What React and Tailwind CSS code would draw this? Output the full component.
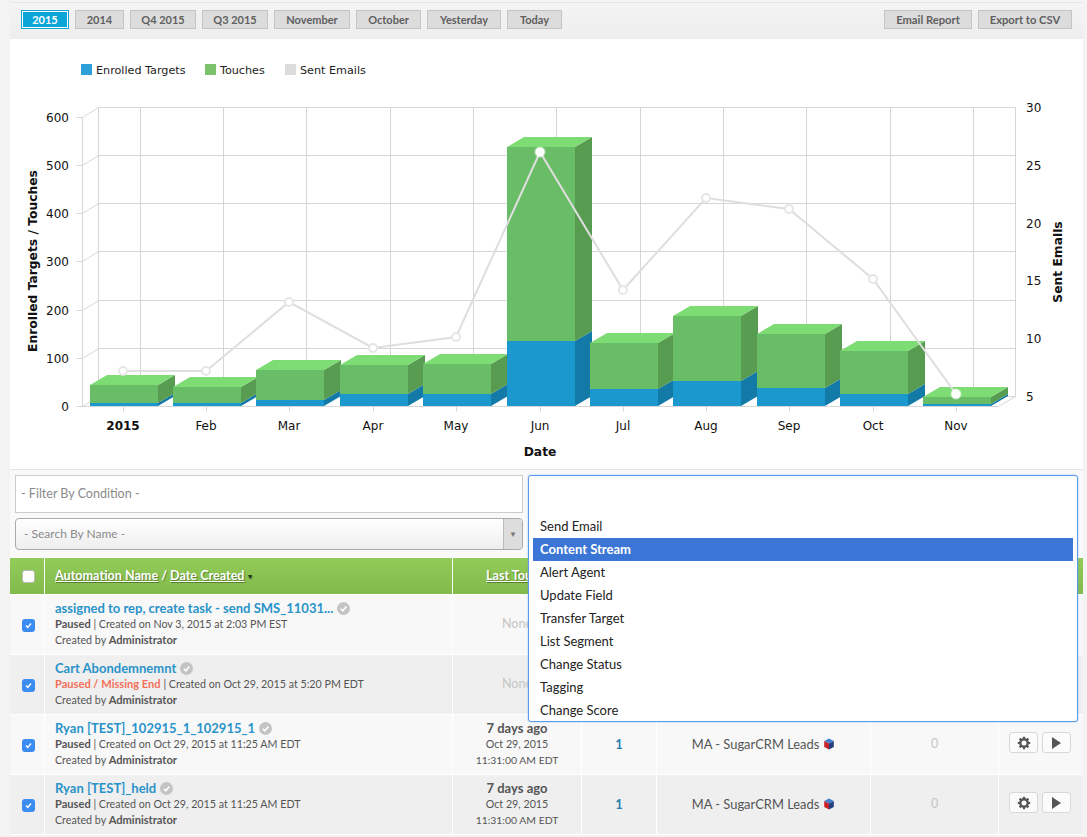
const ranges = [
  { label: '2015', width: 'w-[48px]', active: true },
  { label: '2014', width: 'w-[49px]' },
  { label: 'Q4 2015', width: 'w-[66px]' },
  { label: 'Q3 2015', width: 'w-[66px]' },
  { label: 'November', width: 'w-[76px]' },
  { label: 'October', width: 'w-[65px]' },
  { label: 'Yesterday', width: 'w-[74px]' },
  { label: 'Today', width: 'w-[55px]' },
];

const months = ['2015', 'Feb', 'Mar', 'Apr', 'May', 'Jun', 'Jul', 'Aug', 'Sep', 'Oct', 'Nov'];

// front-face top of the bar and top of the blue part, in page pixels
const bars = [
  [90, 385, 403],
  [173, 387, 403],
  [256, 370, 400],
  [340, 365, 394],
  [423, 364, 394],
  [507, 147, 341],
  [590, 343, 389],
  [673, 316, 381],
  [757, 334, 388],
  [840, 351, 394],
  [923, 397, 404],
];

const sentEmails = [
  [123, 371],
  [206, 371],
  [289, 302],
  [373, 348],
  [456, 337],
  [540, 152],
  [623, 290],
  [706, 198],
  [789, 209],
  [873, 279],
  [956, 394],
];

const gridX = [140, 223, 306, 390, 473, 556, 640, 723, 806, 890, 973];
const gridY = [107, 155, 203, 251, 300, 348];
const leftTicks = [
  ['600', 117],
  ['500', 165],
  ['400', 213],
  ['300', 261],
  ['200', 310],
  ['100', 358],
  ['0', 406],
];
const rightTicks = [
  ['30', 108],
  ['25', 166],
  ['20', 224],
  ['15', 281],
  ['10', 339],
  ['5', 397],
];

const actionsList = ['Send Email', 'Content Stream', 'Alert Agent', 'Update Field', 'Transfer Target', 'List Segment', 'Change Status', 'Tagging', 'Change Score'];

const rows = [
  {
    name: 'assigned to rep, create task - send SMS_11031...',
    status: 'Paused',
    created: 'Created on Nov 3, 2015 at 2:03 PM EST',
    none: true,
    bg: 'bg-[#f8f8f8]',
  },
  {
    name: 'Cart Abondemnemnt',
    status: 'Paused / Missing End',
    warn: true,
    created: 'Created on Oct 29, 2015 at 5:20 PM EDT',
    none: true,
    bg: 'bg-[#efefef]',
  },
  {
    name: 'Ryan [TEST]_102915_1_102915_1',
    status: 'Paused',
    created: 'Created on Oct 29, 2015 at 11:25 AM EDT',
    bg: 'bg-[#f8f8f8]',
  },
  {
    name: 'Ryan [TEST]_held',
    status: 'Paused',
    created: 'Created on Oct 29, 2015 at 11:25 AM EDT',
    bg: 'bg-[#efefef]',
  },
];

const CheckBadge = () => (
  <svg width="13" height="13" viewBox="0 0 13 13" className="ml-1 inline-block align-[-2px]">
    <circle cx="6.5" cy="6.5" r="6.5" fill="#c4c4c4" />
    <path d="M3.8 6.8l2 2 3.6-4.2" fill="none" stroke="#fff" strokeWidth="1.5" />
  </svg>
);

const Cube = () => (
  <svg width="12" height="12" viewBox="0 0 12 12" className="ml-1 inline-block align-[-1px]">
    <path d="M6 0.5l4.8 2.4L6 5.4 1.2 2.9z" fill="#3f7fd0" />
    <path d="M1.2 2.9L6 5.4v6L1.2 9z" fill="#c8242c" />
    <path d="M10.8 2.9L6 5.4v6L10.8 9z" fill="#24407e" />
  </svg>
);

const Gear = () => (
  <svg width="14" height="14" viewBox="0 0 14 14">
    <circle cx="7" cy="7" r="3.7" fill="none" stroke="#555" strokeWidth="2.4" />
    <path d="M7 0.8v2.4M7 10.8v2.4M0.8 7h2.4M10.8 7h2.4M2.6 2.6l1.7 1.7M9.7 9.7l1.7 1.7M11.4 2.6L9.7 4.3M4.3 9.7l-1.7 1.7" stroke="#555" strokeWidth="2.2" />
  </svg>
);

const PlayIcon = () => (
  <svg width="11" height="14" viewBox="0 0 11 14">
    <path d="M1 1l9 6-9 6z" fill="#555" />
  </svg>
);

const Checkbox = ({ checked }) => (
  <span
    className={`flex h-[13px] w-[13px] items-center justify-center rounded-[3px] ${
      checked ? 'bg-[#3b8df1]' : 'border border-[#bbb] bg-white'
    }`}
  >
    {checked && (
      <svg width="9" height="9" viewBox="0 0 9 9">
        <path d="M2 4.6l1.8 1.9L7 2.5" fill="none" stroke="#fff" strokeWidth="1.4" />
      </svg>
    )}
  </span>
);

const Chart = () => (
  <svg width="1073" height="430" viewBox="10 39 1073 430" className="block" style={{ fontFamily: '"DejaVu Sans", sans-serif' }}>
    {/* legend */}
    <rect x="81" y="64" width="11" height="11" fill="#2d9fd9" />
    <text x="96" y="74" fontSize="11.2" fill="#222">Enrolled Targets</text>
    <rect x="205" y="64" width="11" height="11" fill="#7ac36a" />
    <text x="220" y="74" fontSize="11.2" fill="#222">Touches</text>
    <rect x="285" y="64" width="11" height="11" fill="#dcdcdc" />
    <text x="300" y="74" fontSize="11.2" fill="#222">Sent Emails</text>

    {/* back plane and walls */}
    <g stroke="#d6d6d6" strokeWidth="1" fill="none" transform="translate(0.5 0.5)">
      {gridY.map((y) => (
        <path key={y} d={`M82 ${y + 10}L98 ${y}H1015`} />
      ))}
      {gridX.map((x) => (
        <path key={x} d={`M${x} 107V396`} />
      ))}
      <path d="M82 117V406L98 396V107" />
      <path d="M1015 107V396L998 406H82" />
      <path d="M98 396H1015" />
      {leftTicks.map(([label, y]) => (
        <path key={label} d={`M76 ${y}H82`} />
      ))}
      {sentEmails.map(([x]) => (
        <path key={x} d={`M${x} 406V411`} />
      ))}
    </g>

    {/* bars */}
    {bars.map(([x, top, blue]) => (
      <g key={x}>
        <path d={`M${x + 68} ${blue}l17 -10V396l-17 10z`} fill="#137aa8" />
        <path d={`M${x + 68} ${top}l17 -10V${blue - 10}l-17 10z`} fill="#589c52" />
        <path d={`M${x} ${top}l17 -10h68l-17 10z`} fill="#7edc74" />
        <rect x={x} y={top} width="68" height={blue - top} fill="#6abd67" />
        <rect x={x} y={blue} width="68" height={406 - blue} fill="#1b98cd" />
      </g>
    ))}

    {/* sent emails line */}
    <polyline points={sentEmails.map((p) => p.join(',')).join(' ')} fill="none" stroke="#dedede" strokeWidth="2" />
    {sentEmails.map(([x, y], i) =>
      i === 5 || i === 10 ? (
        <circle key={x} cx={x} cy={y} r="4.5" fill="#fff" stroke="#fff" strokeOpacity="0.5" strokeWidth="2" />
      ) : (
        <circle key={x} cx={x} cy={y} r="4" fill="#fff" stroke="#e6e6e6" strokeWidth="2" />
      )
    )}

    {/* axis labels */}
    <g fontSize="12" fill="#111">
      {leftTicks.map(([label, y]) => (
        <text key={label} x="69" y={y + 5} textAnchor="end">{label}</text>
      ))}
      {rightTicks.map(([label, y]) => (
        <text key={label} x="1026" y={y + 4}>{label}</text>
      ))}
      {months.map((m, i) => (
        <text key={m} x={sentEmails[i][0]} y="430" textAnchor="middle" fontWeight={i === 0 ? 'bold' : 'normal'}>
          {m}
        </text>
      ))}
    </g>
    <g fontSize="12.3" fontWeight="bold" fill="#111">
      <text x="540" y="456" textAnchor="middle">Date</text>
      <text transform="translate(37 261) rotate(-90)" textAnchor="middle">Enrolled Targets / Touches</text>
      <text transform="translate(1062 262) rotate(-90)" textAnchor="middle">Sent Emails</text>
    </g>
  </svg>
);

const Row = ({ row }) => (
  <div className={`flex h-[60px] border-b border-white text-[10.7px] text-[#555] ${row.bg}`}>
    <div className="flex w-[35px] shrink-0 items-center justify-center border-r border-white pl-[2px] pt-[2px]">
      <Checkbox checked />
    </div>
    <div className="w-[408px] shrink-0 border-r border-white pl-[10px] pt-[5px] leading-[16px]">
      <div className="text-[13px] font-bold text-[#2a93c9]">
        {row.name}
        <CheckBadge />
      </div>
      <div>
        <b className={`text-[11.1px] ${row.warn ? 'text-[#f4705a]' : ''}`}>{row.status}</b> | {row.created}
      </div>
      <div>
        Created by <b className="text-[11.1px]">Administrator</b>
      </div>
    </div>
    <div className="w-[129px] shrink-0 border-r border-white pt-[5px] text-center leading-[16px]">
      {row.none ? (
        <div className="pt-[16px] text-[12.5px] text-[#c4c4c4]">None</div>
      ) : (
        <>
          <div className="text-[13px] font-bold">7 days ago</div>
          <div>Oct 29, 2015</div>
          <div className="text-[10.4px]">11:31:00 AM EDT</div>
        </>
      )}
    </div>
    <div className="flex w-[75px] shrink-0 items-center justify-center border-r border-white text-[13px] font-bold text-[#2a7fb0]">
      {!row.none && '1'}
    </div>
    <div className="flex w-[214px] shrink-0 items-center justify-center border-r border-white text-[12.9px]">
      {!row.none && (
        <span>
          MA - SugarCRM Leads
          <Cube />
        </span>
      )}
    </div>
    <div className="flex w-[128px] shrink-0 items-center justify-center border-r border-white text-[12.5px] text-[#c4c4c4]">
      {!row.none && '0'}
    </div>
    <div className="flex flex-1 justify-start gap-[4px] pl-[10px] pt-[17px]">
      <button className="flex h-[21px] w-[29px] items-center justify-center rounded-[3px] border border-[#d8d8d8] bg-[#fbfbfb]">
        <Gear />
      </button>
      <button className="flex h-[21px] w-[29px] items-center justify-center rounded-[3px] border border-[#d8d8d8] bg-[#fbfbfb]">
        <PlayIcon />
      </button>
    </div>
  </div>
);

export default function App() {
  return (
    <div className="h-[837px] overflow-hidden bg-[#f3f3f3] pl-[10px] pr-[4px] pt-[2px] font-['Lato','Open_Sans',sans-serif]">
      {/* toolbar */}
      <div className="flex h-[37px] items-center justify-between border-t border-[#e6e6e6] bg-gradient-to-b from-[#f4f4f4] to-[#eeeeee] pb-[3px] pl-[11px] pr-[11px]">
        <div className="flex gap-[6px]">
          {ranges.map((r) => (
            <button
              key={r.label}
              className={`h-[19px] border text-[11px] font-bold leading-none ${r.width} ${
                r.active ? 'border-[#12a5d8] bg-[#0ba5d8] text-white outline outline-1 outline-white -outline-offset-2' : 'border-[#c4c4c4] bg-[#dcdcdc] text-[#5f5f5f]'
              }`}
            >
              {r.label}
            </button>
          ))}
        </div>
        <div className="flex gap-[6px]">
          <button className="h-[19px] w-[88px] border border-[#c4c4c4] bg-[#dcdcdc] text-[11.2px] font-bold leading-none text-[#5f5f5f]">Email Report</button>
          <button className="h-[19px] w-[94px] border border-[#c4c4c4] bg-[#dcdcdc] text-[11.2px] font-bold leading-none text-[#5f5f5f]">Export to CSV</button>
        </div>
      </div>

      {/* chart */}
      <div className="h-[431px] border-b border-[#e4e4e4] bg-white">
        <Chart />
      </div>

      {/* filters */}
      <div className="relative h-[88px] bg-[#f9f9f9] pl-[5px] pr-[5px] pt-[5px]">
        <div className="flex w-[508px] flex-col gap-[5px] text-[12.5px]">
          <div className="flex h-[38px] items-center border border-[#ccc] bg-white pl-[5px] text-[#8a8a8a]">- Filter By Condition -</div>
          <div className="flex h-[32px] items-center justify-between rounded-[4px] border border-[#aaa] bg-gradient-to-b from-white to-[#eee] pl-[8px] text-[12px] text-[#8a8a8a]">
            - Search By Name -
            <span className="flex h-full w-[19px] items-center justify-center rounded-r-[4px] border-l border-[#bbb] bg-[#ddd] text-[8px] text-[#777]">▼</span>
          </div>
        </div>
      </div>

      {/* table */}
      <div className="flex h-[37px] border-b border-white bg-gradient-to-b from-[#92cc58] to-[#82ba4c] text-[12.6px] font-bold text-white [text-shadow:1px_1px_1px_rgba(0,0,0,0.35)]">
        <div className="flex w-[35px] shrink-0 items-center justify-center border-r border-white pl-[2px]">
          <Checkbox />
        </div>
        <div className="flex w-[408px] shrink-0 items-center border-r border-white pl-[10px]">
          <u>Automation Name</u>
          <span className="mx-[3px]">/</span>
          <u>Date Created</u>
          <span className="ml-[2px] text-[7px] text-[#1f3a1f]">▼</span>
        </div>
        <div className="flex flex-1 items-center pl-[33px]">
          <u>Last Touch</u>
        </div>
      </div>
      {rows.map((row) => (
        <Row key={row.name} row={row} />
      ))}

      {/* open actions list */}
      <div className="absolute left-[528px] top-[475px] h-[247px] w-[550px] rounded-[3px] border border-[#5b9bec] bg-white pb-[4px] pl-[4px] pr-[4px] pt-[39px] text-[13px] leading-[23px] text-[#222] shadow-[0_0_2px_rgba(91,155,236,0.6)]">
        <div className="h-full overflow-hidden">
          {actionsList.map((a) => (
            <div key={a} className={`h-[23px] pl-[7px] ${a === 'Content Stream' ? 'bg-[#3b75d6] font-bold text-white' : ''}`}>
              {a}
            </div>
          ))}
        </div>
      </div>
    </div>
  );
}
